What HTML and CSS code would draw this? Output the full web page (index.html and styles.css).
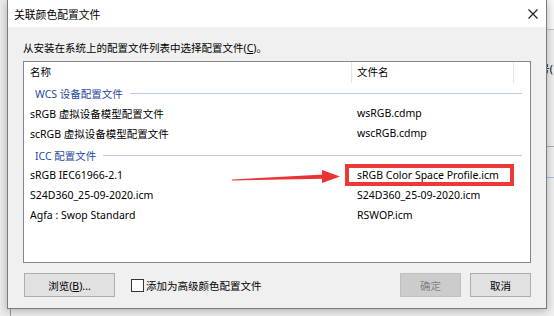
FILE: index.html
```html
<!DOCTYPE html>
<html lang="zh-CN">
<head>
  <meta charset="UTF-8" />
  <title>关联颜色配置文件</title>
  <link rel="stylesheet" href="styles.css">
</head>
<body>
  <div class="desk">
    <div class="backwin">
      <div class="back-top"></div>
      <div class="back-label">号(</div>
      <div class="back-line"></div>
      <div class="back-line blue"></div>
    </div>
  </div>

  <div class="dialog">
    <div class="titlebar">
      <span class="title">关联颜色配置文件</span>
      <svg class="close" width="10" height="10" viewBox="0 0 10 10">
        <path d="M0.5 0.5 L9.5 9.5 M9.5 0.5 L0.5 9.5" stroke="#1a1a1a" stroke-width="1.1" fill="none"/>
      </svg>
    </div>

    <div class="body">
      <div class="label">从安装在系统上的配置文件列表中选择配置文件(<u>C</u>)。</div>

      <div class="listbox">
        <div class="head">
          <div class="col name">名称</div>
          <div class="col file">文件名</div>
          <div class="col rest"></div>
        </div>

        <div class="group">
          <span>WCS 设备配置文件</span>
          <span class="rule"></span>
        </div>
        <div class="row">
          <div class="col name">sRGB 虚拟设备模型配置文件</div>
          <div class="col file">wsRGB.cdmp</div>
        </div>
        <div class="row">
          <div class="col name">scRGB 虚拟设备模型配置文件</div>
          <div class="col file">wscRGB.cdmp</div>
        </div>

        <div class="group second">
          <span>ICC 配置文件</span>
          <span class="rule"></span>
        </div>
        <div class="row">
          <div class="col name">sRGB IEC61966-2.1</div>
          <div class="col file marked">sRGB Color Space Profile.icm</div>
        </div>
        <div class="row">
          <div class="col name">S24D360_25-09-2020.icm</div>
          <div class="col file">S24D360_25-09-2020.icm</div>
        </div>
        <div class="row">
          <div class="col name">Agfa : Swop Standard</div>
          <div class="col file">RSWOP.icm</div>
        </div>

        <svg class="arrow" width="120" height="20" viewBox="0 0 120 20">
          <polygon points="0,10.5 0,11.5 92,9.8 92,5.6" fill="#ec3232"/>
          <polygon points="90,1 108,7.5 90,14" fill="#ec3232"/>
        </svg>
      </div>

      <div class="buttons">
        <button class="btn browse">浏览(<u>B</u>)...</button>
        <label class="check"><span class="box"></span>添加为高级颜色配置文件</label>
        <span class="spacer"></span>
        <button class="btn" disabled>确定</button>
        <button class="btn">取消</button>
      </div>
    </div>
  </div>
</body>
</html>
```

FILE: styles.css
```css
* {
  box-sizing: border-box;
}
body {
  margin: 0;
  width: 554px;
  height: 316px;
  overflow: hidden;
  background: #ececec;
  font-family: "Noto Sans", "Noto Sans CJK SC", sans-serif;
  font-size: 10.5px;
  color: #000;
  position: relative;
}
u {
  text-decoration: underline;
  text-underline-offset: 1px;
}

/* window behind the dialog */
.desk {
  height: 316px;
  padding-left: 10px;
}
.backwin {
  height: 100%;
  background: #f0f0f0;
  border-left: 1px solid #9a9a9a;
}
.back-top {
  height: 30px;
  background: #fafafa;
  border-bottom: 1px solid #c4c4c4;
}
.back-label {
  margin-top: 32px;
  text-align: right;
  margin-right: 1px;
  line-height: 14px;
}
.back-line {
  margin-top: 70px;
  height: 1px;
  background: #b0b0b0;
}
.back-line.blue {
  margin-top: 30px;
  background: #a9bfe6;
}

/* dialog */
.dialog {
  position: absolute;
  left: 7px;
  top: -1px;
  width: 540px;
  height: 310px;
  background: #f0f0f0;
  border: 1px solid #7c7c7c;
  box-shadow: 0 2px 9px rgba(0, 0, 0, 0.28);
  display: flex;
  flex-direction: column;
}
.titlebar {
  height: 27px;
  background: #fff;
  display: flex;
  align-items: center;
  padding: 0 8px 0 6px;
}
.title {
  font-size: 10.8px;
  flex: 1;
}
.body {
  flex: 1;
  padding: 14px 15px 0 15px;
}
.label {
  line-height: 14px;
  margin-bottom: 6px;
}

.listbox {
  position: relative;
  height: 202px;
  background: #fff;
  border: 1px solid #828790;
}
.head, .row {
  display: flex;
  height: 20px;
  align-items: center;
}
.head {
  height: 21px;
}
.col {
  white-space: nowrap;
}
.col.name {
  width: 328px;
  padding-left: 6px;
}
.col.file {
  width: 162px;
  padding-left: 5px;
}
.head .col {
  height: 21px;
  line-height: 21px;
  border-right: 1px solid #e5e5e5;
}
.head .col.rest {
  border-right: none;
}
.group {
  display: flex;
  align-items: center;
  height: 20px;
  padding: 0 8px 0 11px;
  color: #2748a0;
}
.group.second {
  height: 22px;
  padding-top: 3px;
}
.group .rule {
  flex: 1;
  height: 1px;
  margin-left: 7px;
  background: #b9c9ea;
}
.marked {
  position: relative;
}
.marked::after {
  content: "";
  position: absolute;
  left: -7px;
  right: 0;
  top: -4px;
  bottom: -4px;
  border: 4px solid #ee3737;
}
.arrow {
  position: absolute;
  left: 208px;
  top: 107px;
}

.buttons {
  display: flex;
  align-items: center;
  margin-top: 10px;
  padding-left: 1px;
}
.btn {
  height: 24px;
  width: 61px;
  font: inherit;
  color: #000;
  background: #e1e1e1;
  border: 1px solid #adadad;
  padding: 0;
}
.btn.browse {
  width: 91px;
}
.btn:disabled {
  background: #cccccc;
  border-color: #bfbfbf;
  color: #838383;
}
.btn + .btn {
  margin-left: 9px;
}
.check {
  display: flex;
  align-items: center;
  margin-left: 16px;
}
.box {
  width: 13px;
  height: 13px;
  background: #fff;
  border: 1px solid #333;
  margin-right: 2px;
}
.spacer {
  flex: 1;
}
```
